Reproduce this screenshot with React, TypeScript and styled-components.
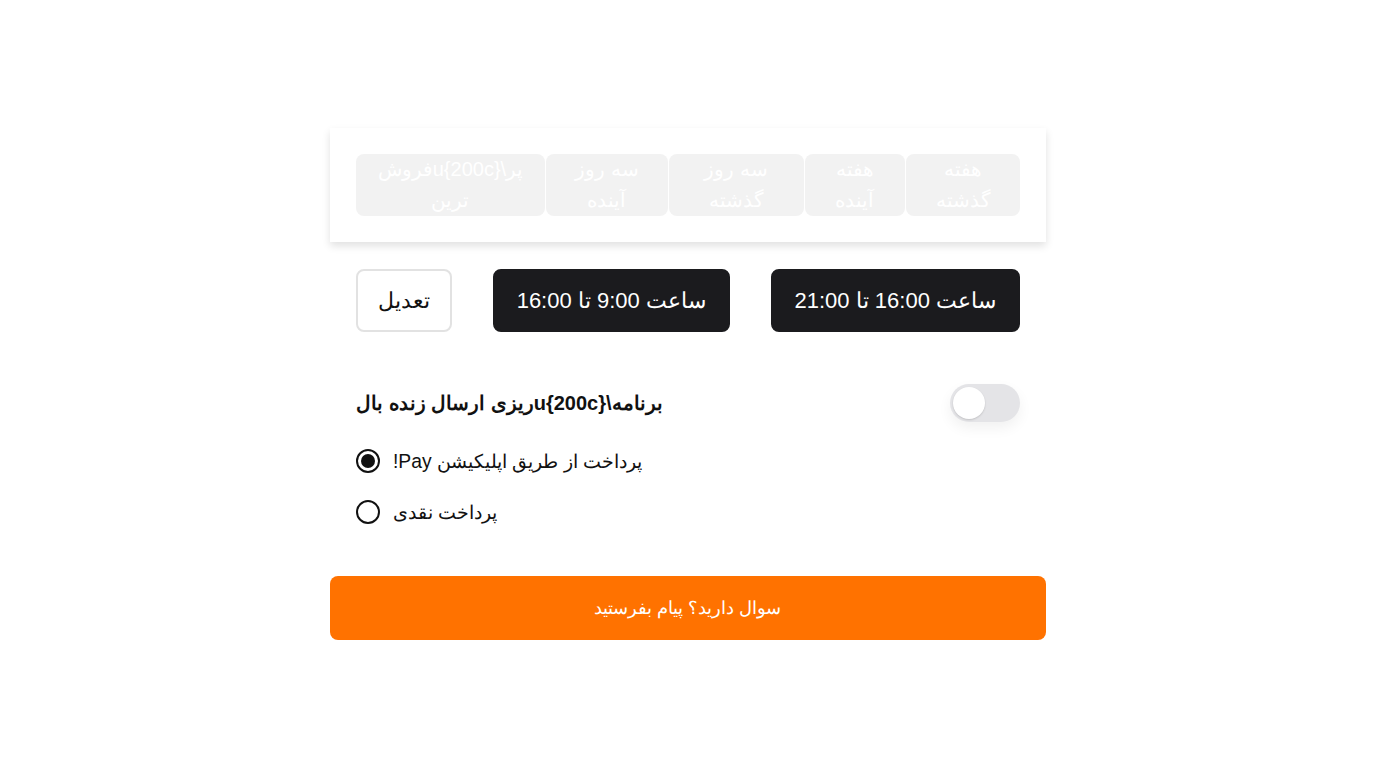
import React, { useState } from 'react'
import styled, { createGlobalStyle } from 'styled-components'

const GlobalStyle = createGlobalStyle`
  html, body {
    margin: 0;
    padding: 0;
    background: #fff;
  }
  body {
    font-family: "Liberation Sans", Arial, sans-serif;
    color: #111;
  }
`

const Page = styled.div`
  min-height: 100vh;
  display: flex;
  align-items: center;
  justify-content: center;
`

const Panel = styled.div`
  width: 716px;
  display: flex;
  flex-direction: column;
`

const Card = styled.div`
  background: #fff;
  padding: 26px;
  box-shadow: 0 4px 8px rgba(0, 0, 0, 0.12);
`

const Tabs = styled.div`
  direction: rtl;
  display: flex;
  gap: 1px;
`

const Tab = styled.button`
  flex: 1 1 auto;
  height: 62px;
  border: 0;
  border-radius: 8px;
  background: #f2f2f2;
  color: #fff;
  font-family: inherit;
  font-size: 20px;
  line-height: 31px;
  padding: 0 16px;
  cursor: pointer;
`

const TimeRow = styled.div`
  direction: rtl;
  display: flex;
  justify-content: space-between;
  margin-top: 27px;
  padding: 0 26px;
`

const TimeButton = styled.button<{ $outline?: boolean }>`
  height: 63px;
  padding: 0 ${p => (p.$outline ? '20px' : '22px')};
  border-radius: 8px;
  border: 2px solid ${p => (p.$outline ? '#e2e2e2' : '#1b1b1e')};
  background: ${p => (p.$outline ? '#fff' : '#1b1b1e')};
  color: ${p => (p.$outline ? '#111' : '#fff')};
  font-family: inherit;
  font-size: 22px;
  cursor: pointer;
`

const ToggleRow = styled.div`
  display: flex;
  align-items: center;
  justify-content: space-between;
  margin-top: 52px;
  padding: 0 26px;
`

const ToggleLabel = styled.div`
  direction: rtl;
  font-size: 20px;
  font-weight: 700;
`

const Switch = styled.button<{ $on: boolean }>`
  position: relative;
  width: 70px;
  height: 38px;
  border: 0;
  border-radius: 19px;
  background: ${p => (p.$on ? '#1b1b1e' : '#e4e4e7')};
  box-shadow: 0 6px 14px rgba(0, 0, 0, 0.06);
  cursor: pointer;
  padding: 0;

  &::after {
    content: '';
    position: absolute;
    top: 3px;
    left: ${p => (p.$on ? '35px' : '3px')};
    width: 32px;
    height: 32px;
    border-radius: 50%;
    background: #fff;
    box-shadow: 0 1px 2px rgba(0, 0, 0, 0.15);
  }
`

const RadioList = styled.div`
  display: flex;
  flex-direction: column;
  gap: 27px;
  margin-top: 27px;
  padding: 0 26px;
`

const RadioRow = styled.label`
  display: flex;
  align-items: center;
  gap: 13px;
  height: 24px;
  cursor: pointer;
`

const RadioDot = styled.span<{ $checked: boolean }>`
  width: 24px;
  height: 24px;
  box-sizing: border-box;
  border: 2px solid #111;
  border-radius: 50%;
  display: flex;
  align-items: center;
  justify-content: center;

  &::after {
    content: '';
    width: 14px;
    height: 14px;
    border-radius: 50%;
    background: ${p => (p.$checked ? '#111' : 'transparent')};
  }
`

const RadioText = styled.span`
  direction: rtl;
  font-size: 19.3px;
`

const AskButton = styled.button`
  margin-top: 52px;
  height: 64px;
  border: 0;
  border-radius: 8px;
  background: #ff7200;
  color: #fff;
  font-family: inherit;
  font-size: 18px;
  cursor: pointer;
`

const tabs = [
  'هفته گذشته',
  'هفته آینده',
  'سه روز گذشته',
  'سه روز آینده',
  'پر\\u{200c}فروش ترین',
]

const liveLabel = 'برنامه\\u{200c}ریزی ارسال زنده بال'

export default function App() {
  const [live, setLive] = useState(false)
  const [pay, setPay] = useState('app')

  return (
    <Page>
      <GlobalStyle />
      <Panel>
        <Card>
          <Tabs>
            {tabs.map(t => (
              <Tab key={t}>{t}</Tab>
            ))}
          </Tabs>
        </Card>

        <TimeRow>
          <TimeButton>ساعت 16:00 تا 21:00</TimeButton>
          <TimeButton>ساعت 9:00 تا 16:00</TimeButton>
          <TimeButton $outline>تعدیل</TimeButton>
        </TimeRow>

        <ToggleRow>
          <ToggleLabel>{liveLabel}</ToggleLabel>
          <Switch $on={live} onClick={() => setLive(!live)} />
        </ToggleRow>

        <RadioList>
          <RadioRow onClick={() => setPay('app')}>
            <RadioDot $checked={pay === 'app'} />
            <RadioText>پرداخت از طریق اپلیکیشن Pay!</RadioText>
          </RadioRow>
          <RadioRow onClick={() => setPay('cash')}>
            <RadioDot $checked={pay === 'cash'} />
            <RadioText>پرداخت نقدی</RadioText>
          </RadioRow>
        </RadioList>

        <AskButton>سوال دارید؟ پیام بفرستید</AskButton>
      </Panel>
    </Page>
  )
}
